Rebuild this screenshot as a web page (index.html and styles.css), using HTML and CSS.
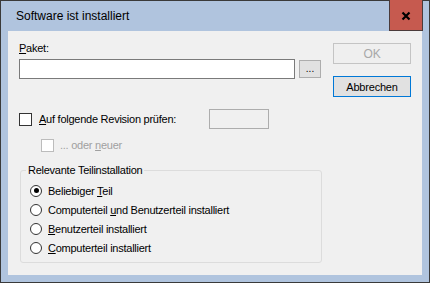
FILE: index.html
```html
<!DOCTYPE html>
<html lang="de">
<head>
<meta charset="utf-8">
<title>Software ist installiert</title>
<link rel="stylesheet" href="styles.css">
</head>
<body>
<div class="window">
  <div class="titlebar">
    <span class="title">Software ist installiert</span>
    <div class="close">
      <svg width="10" height="10" viewBox="0 0 10 10"><path d="M1.5 1.5 L8.5 8.5 M8.5 1.5 L1.5 8.5" stroke="#000" stroke-width="2.2" fill="none"/></svg>
    </div>
  </div>
  <div class="client">
    <div class="main">
      <div class="label"><u>P</u>aket:</div>
      <div class="pathrow">
        <div class="input"></div>
        <div class="browse">...</div>
      </div>
      <div class="checkrow">
        <span class="check"></span>
        <span class="checklabel"><u>A</u>uf folgende Revision prüfen:</span>
        <div class="revbox"></div>
      </div>
      <div class="subrow">
        <span class="check disabled"></span>
        <span class="sublabel">... oder <u>n</u>euer</span>
      </div>
      <fieldset class="group">
        <legend>Relevante Teilinstallation</legend>
        <div class="radiorow"><span class="radio checked"></span><span>Beliebiger <u>T</u>eil</span></div>
        <div class="radiorow"><span class="radio"></span><span>Computerteil <u>u</u>nd Benutzerteil installiert</span></div>
        <div class="radiorow"><span class="radio"></span><span><u>B</u>enutzerteil installiert</span></div>
        <div class="radiorow"><span class="radio"></span><span><u>C</u>omputerteil installiert</span></div>
      </fieldset>
    </div>
    <div class="buttons">
      <div class="btn ok">OK</div>
      <div class="btn cancel">Abbrechen</div>
    </div>
  </div>
</div>
</body>
</html>
```
FILE: styles.css
```css
* { box-sizing: border-box; }
html, body { margin: 0; padding: 0; background: #b0c4de; }
body {
  font-family: "Liberation Sans", Arial, sans-serif;
  font-size: 11px;
  color: #000;
}
.window {
  width: 430px;
  height: 283px;
  border: 1px solid #3a3a3a;
  background: #b0c4de;
  display: flex;
  flex-direction: column;
}
.titlebar {
  height: 30px;
  display: flex;
  justify-content: space-between;
  align-items: flex-start;
  padding: 0 6px 0 15px;
}
.title {
  font-size: 12px;
  line-height: 30px;
  color: #000;
}
.close {
  width: 34px;
  height: 31px;
  margin-top: -1px;
  background: #c65a4f;
  border: 1px solid #4a3b3b;
  border-top: none;
  display: flex;
  align-items: center;
  justify-content: center;
  padding-top: 1px;
}
.client {
  margin: 0 7px 7px 7px;
  height: 244px;
  background: #f0f0f0;
  display: flex;
  gap: 12px;
  padding: 11px 11px 0 11px;
  letter-spacing: -0.25px;
}
.main {
  width: 302px;
  display: flex;
  flex-direction: column;
}
.label { line-height: 13px; }
u { text-decoration: underline; text-underline-offset: 1px; }
.pathrow {
  margin-top: 4px;
  display: flex;
  align-items: flex-start;
}
.input {
  width: 276px;
  height: 20px;
  background: #fff;
  border: 1px solid #7a7a7a;
}
.browse {
  margin-left: 4px;
  margin-top: 1px;
  width: 22px;
  height: 18px;
  background: #e1e1e1;
  border: 1px solid #adadad;
  text-align: center;
  line-height: 16px;
  font-size: 10px;
  letter-spacing: 0;
}
.checkrow {
  margin-top: 30px;
  height: 20px;
  display: flex;
  align-items: center;
}
.check {
  width: 13px;
  height: 13px;
  background: #fff;
  border: 1px solid #333;
  flex: none;
}
.check.disabled { border-color: #bcbcbc; }
.checklabel {
  margin-left: 7px;
  width: 170px;
  line-height: 13px;
}
.revbox {
  width: 60px;
  height: 20px;
  border: 1px solid #adadad;
  background: #f0f0f0;
}
.subrow {
  margin-top: 10px;
  margin-left: 22px;
  height: 13px;
  display: flex;
  align-items: center;
}
.sublabel {
  margin-left: 6px;
  color: #a0a0a0;
  line-height: 13px;
}
.group {
  margin: 12px 0 0 1px;
  width: 302px;
  height: 99px;
  border: 1px solid #dcdcdc;
  border-radius: 3px;
  padding: 4px 5px 5px 5px;
  min-inline-size: 0;
}
.group legend {
  padding: 0 2px;
  line-height: 13px;
}
.radiorow {
  height: 19px;
  display: flex;
  align-items: center;
  margin-left: 4px;
}
.radio {
  width: 12px;
  height: 12px;
  border: 1px solid #333;
  border-radius: 50%;
  background: #fff;
  margin-right: 6px;
  flex: none;
  display: flex;
  align-items: center;
  justify-content: center;
}
.radio.checked::after {
  content: "";
  width: 5px;
  height: 5px;
  border-radius: 50%;
  background: #000;
}
.buttons {
  width: 78px;
  display: flex;
  flex-direction: column;
}
.btn {
  width: 78px;
  height: 21px;
  display: flex;
  align-items: center;
  justify-content: center;
  letter-spacing: -0.2px;
}
.ok {
  margin-top: 1px;
  background: #efefef;
  border: 1px solid #c4c4c4;
  color: #a8a8a8;
  font-size: 12px;
}
.cancel {
  margin-top: 12px;
  background: #e1e1e1;
  border: 1px solid #0078d7;
}
```
